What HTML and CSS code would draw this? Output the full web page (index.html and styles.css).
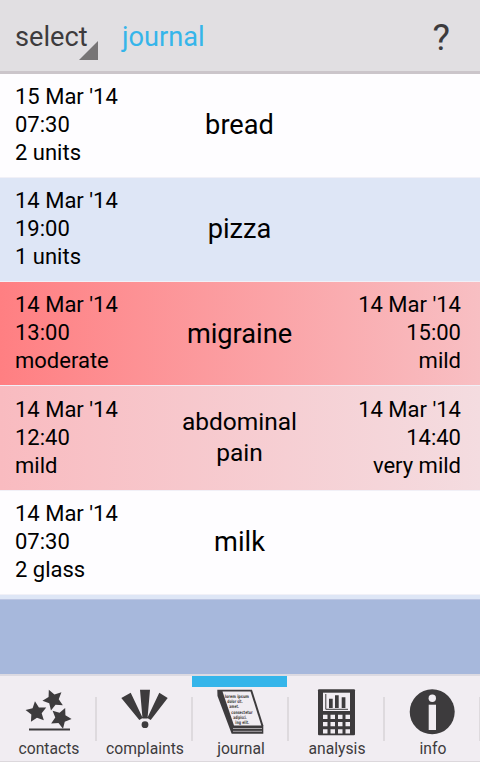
FILE: index.html
```
<!DOCTYPE html>
<html lang="en">
<head>
  <meta charset="UTF-8">
  <meta name="viewport" content="width=device-width, initial-scale=1.0">
  <title>Journal</title>
  <link rel="stylesheet" href="styles.css">
</head>
<body>
  <header class="topbar">
    <div class="select">select
      <svg class="select-arrow" width="19" height="19" viewBox="0 0 19 19"><path d="M19 0v19H0z" fill="#777576"/></svg>
    </div>
    <h1>journal</h1>
    <div class="help">?</div>
  </header>

  <main class="list">
    <div class="entry white">
      <div class="start">15 Mar '14<br>07:30<br>2 units</div>
      <div class="name">bread</div>
      <div class="end"></div>
    </div>
    <div class="entry blue">
      <div class="start">14 Mar '14<br>19:00<br>1 units</div>
      <div class="name">pizza</div>
      <div class="end"></div>
    </div>
    <div class="entry red">
      <div class="start">14 Mar '14<br>13:00<br>moderate</div>
      <div class="name">migraine</div>
      <div class="end">14 Mar '14<br>15:00<br>mild</div>
    </div>
    <div class="entry pink">
      <div class="start">14 Mar '14<br>12:40<br>mild</div>
      <div class="name long">abdominal<br>pain</div>
      <div class="end">14 Mar '14<br>14:40<br>very mild</div>
    </div>
    <div class="entry white">
      <div class="start">14 Mar '14<br>07:30<br>2 glass</div>
      <div class="name">milk</div>
      <div class="end"></div>
    </div>
  </main>
  <div class="filler"></div>

  <nav class="tabs">
    <div class="tab">
      <svg width="48" height="48" viewBox="0 0 48 48" fill="#3d3b3d">
        <defs>
          <path id="star" d="M0-11L3.200-4.400 10.400-3.400 5.200 1.700 6.500 8.900 0 5.500-6.500 8.900-5.200 1.700-10.400-3.400-3.200-4.400z"/>
        </defs>
        <use href="#star" transform="translate(29.3 11.7) rotate(-24)"/>
        <use href="#star" transform="translate(12.3 24.2) rotate(-7)"/>
        <use href="#star" transform="translate(36.7 30) rotate(24)"/>
        <path d="M5 40.400h41v2H5z"/>
      </svg>
      <span>contacts</span>
    </div>
    <div class="tab">
      <svg width="48" height="48" viewBox="0 0 48 48" fill="#3d3b3d">
        <path d="M20 1.700h10L27.500 30.500h-5zM1.300 10l9.400-5.300L22.700 30l-3.400 2zM39.300 4.700l8.400 5.300-17 22-3.400-2z"/>
        <circle cx="25" cy="36.700" r="3.400"/>
      </svg>
      <span>complaints</span>
    </div>
    <div class="tab active">
      <svg width="48" height="48" viewBox="0 0 48 48">
        <path d="M1.300 1.700H36l11.300 35.600v8.400H15.700L1.500 8z" fill="#3d3b3d"/>
        <path d="M6.500 3.500h28L45.300 37.500H18z" fill="#f1edf2"/>
        <path d="M17 40.500h29M17 43.300h29" stroke="#a9a6a9" stroke-width="1"/>
        <g class="page-text">
          <text x="8.700" y="9.700" textLength="24.300" lengthAdjust="spacingAndGlyphs">lorem ipsum</text>
          <text x="11.300" y="15" textLength="15.400" lengthAdjust="spacingAndGlyphs">dolor sit.</text>
          <text x="13.300" y="20.400" textLength="9.700" lengthAdjust="spacingAndGlyphs">amet.</text>
          <text x="15.300" y="25.700" textLength="21.400" lengthAdjust="spacingAndGlyphs">consectetur</text>
          <text x="17.300" y="31" textLength="13.400" lengthAdjust="spacingAndGlyphs">adipisci.</text>
          <text x="19.300" y="36.400" textLength="14" lengthAdjust="spacingAndGlyphs">ing elit.</text>
        </g>
      </svg>
      <span>journal</span>
    </div>
    <div class="tab">
      <svg width="48" height="48" viewBox="0 0 48 48">
        <rect x="6" y="1.300" width="37" height="46" rx="1" fill="#3d3b3d"/>
        <path d="M11 4.700h27V23H11z" fill="#f1edf2"/>
        <path d="M13.800 6v15.300H36" fill="none" stroke="#3d3b3d"/>
        <path d="M17 10.700h3.700V20H17zM23 7.300h3.700V20H23zM29.700 9.300h3.700V20h-3.700z" fill="#3d3b3d"/>
        <path d="M11 28.800h27.500M11 36.100h27.500M11 43.300h27.500" stroke="#f1edf2" stroke-width="4.200" stroke-dasharray="4.500 3"/>
      </svg>
      <span>analysis</span>
    </div>
    <div class="tab">
      <svg width="48" height="48" viewBox="0 0 48 48">
        <circle cx="24.200" cy="23.800" r="22.500" fill="#3d3b3d"/>
        <circle cx="24.300" cy="10.300" r="3.700" fill="#f1edf2"/>
        <path d="M20.700 16.700H28V42h-7.300z" fill="#f1edf2"/>
      </svg>
      <span>info</span>
    </div>
  </nav>
</body>
</html>
```
FILE: styles.css
```
* { box-sizing: border-box; }
body { margin: 0; width: 480px; height: 762px; overflow: hidden; display: flex; flex-direction: column; font-family: Roboto, sans-serif; color: #000; background: #dee6f6; }

.topbar { height: 73.500px; flex: none; display: flex; align-items: center; padding: 3px 30px 0 15px; background: #e1dfe2; border-bottom: 3px solid #cbc5ca; color: #3d3b3d; font-size: 27.200px; line-height: 32px; }
.select { position: relative; width: 83px; margin-right: 24px; }
.select-arrow { position: absolute; right: 0; bottom: -7px; }
.topbar h1 { margin: 0; font-size: 27.200px; font-weight: 400; color: #35b5ea; }
.help { margin-left: auto; padding-top: 2px; font-size: 37px; }

.list { flex: none; padding-bottom: 4.500px; }
.entry { display: grid; grid-template-columns: 130px 1fr 130px; align-items: center; height: 104.300px; padding: 0 19px 1px 15px; border-bottom: 1px solid #f1f0f7; font-size: 22px; line-height: 28px; }
.name { padding-top: 2px; padding-left: 3px; text-align: center; font-size: 27.200px; line-height: 31px; }
.long { padding-top: 0; padding-bottom: 2px; font-size: 24.500px; }
.end { text-align: right; }
.white { background: #fefdff; }
.blue { background: #dee6f6; }
.red { background: linear-gradient(90deg, #ff7f82, #f8bfc3); }
.pink { background: linear-gradient(90deg, #f9bbc0, #f4dce0); }
.filler { flex: 1; background: #a7b8dc; border-top: 1px solid #bcc5e2; }

.tabs { flex: none; height: 88px; display: flex; background: #f1edf2; border-top: 2px solid #dcdae2; border-bottom: 1px solid #dcd8dc; }
.tab { position: relative; width: 96px; padding-top: 12px; display: flex; flex-direction: column; align-items: center; color: #3d3b3d; font-size: 15.700px; line-height: 22px; }
.tab span { margin-top: 2px; padding-left: 2px; }
/* divider on the right of each tab */
.tab::after { content: ""; position: absolute; right: -1px; top: 21px; width: 2px; height: 44px; background: #dedade; }
.active { background: linear-gradient(#35b5ea, #35b5ea) 0 0 / 95px 11px no-repeat; }
.page-text { font-family: "DejaVu Sans", sans-serif; font-weight: bold; font-size: 4.500px; fill: #3d3b3d; }
```
